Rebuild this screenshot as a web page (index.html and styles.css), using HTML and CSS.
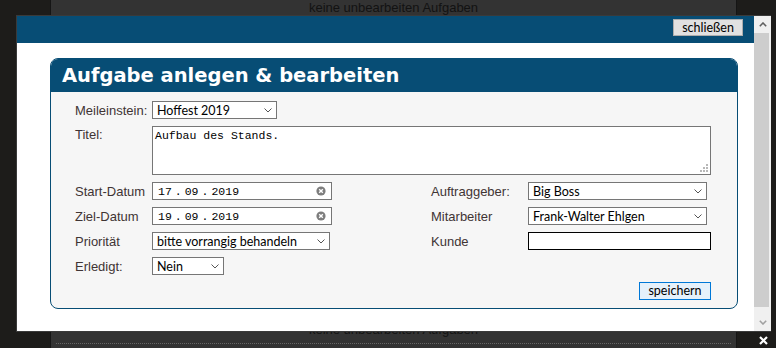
FILE: index.html
```html
<!DOCTYPE html>
<html lang="de">

<head>
    <meta charset="UTF-8">
    <meta name="viewport" content="width=device-width, initial-scale=1.0">
    <title>Aufgaben</title>
    <link rel="stylesheet" href="styles.css">
</head>

<body>
    <!-- Seite im Hintergrund -->
    <div class="page">
        <div class="task-row">keine unbearbeiten Aufgaben</div>
        <div class="task-row task-row-last">keine unbearbeiten Aufgaben</div>
    </div>

    <!-- Dialog -->
    <div class="modal">
        <div class="modal-content">
            <div class="modal-bar">
                <button class="btn btn-close" type="button">schließen</button>
            </div>

            <form class="panel">
                <h1 class="panel-title">Aufgabe anlegen &amp; bearbeiten</h1>
                <div class="panel-body">
                    <div class="field-row">
                        <label class="label">Meileinstein:</label>
                        <span class="select select-milestone">
                            <select><option>Hoffest 2019</option></select>
                            <svg class="chevron" width="8" height="5" viewBox="0 0 8 5"><polyline points="0.5,0.5 4,4 7.5,0.5" fill="none" stroke="#555" stroke-width="1"/></svg>
                        </span>
                    </div>

                    <div class="field-row field-row-top">
                        <label class="label label-top">Titel:</label>
                        <span class="textarea-wrap">
                            <textarea class="textarea">Aufbau des Stands.</textarea>
                            <svg class="grip" width="8" height="8" viewBox="0 0 8 8">
                                <rect x="6" y="0" width="2" height="2"/>
                                <rect x="3" y="3" width="2" height="2"/>
                                <rect x="6" y="3" width="2" height="2"/>
                                <rect x="0" y="6" width="2" height="2"/>
                                <rect x="3" y="6" width="2" height="2"/>
                                <rect x="6" y="6" width="2" height="2"/>
                            </svg>
                        </span>
                    </div>

                    <div class="field-grid">
                        <label class="label">Start-Datum</label>
                        <div class="date-input">
                            <span>17</span><span class="sep">.</span><span>09</span><span class="sep">.</span><span>2019</span>
                            <svg class="clear" width="10" height="10" viewBox="0 0 10 10"><circle cx="5" cy="5" r="4.6" fill="#7d7d7d"/><path d="M3.2 3.2 L6.8 6.8 M6.8 3.2 L3.2 6.8" stroke="#fff" stroke-width="1.4"/></svg>
                        </div>
                        <label class="label">Auftraggeber:</label>
                        <span class="select select-wide">
                            <select><option>Big Boss</option></select>
                            <svg class="chevron" width="8" height="5" viewBox="0 0 8 5"><polyline points="0.5,0.5 4,4 7.5,0.5" fill="none" stroke="#555" stroke-width="1"/></svg>
                        </span>

                        <label class="label">Ziel-Datum</label>
                        <div class="date-input">
                            <span>19</span><span class="sep">.</span><span>09</span><span class="sep">.</span><span>2019</span>
                            <svg class="clear" width="10" height="10" viewBox="0 0 10 10"><circle cx="5" cy="5" r="4.6" fill="#7d7d7d"/><path d="M3.2 3.2 L6.8 6.8 M6.8 3.2 L3.2 6.8" stroke="#fff" stroke-width="1.4"/></svg>
                        </div>
                        <label class="label">Mitarbeiter</label>
                        <span class="select select-wide">
                            <select><option>Frank-Walter Ehlgen</option></select>
                            <svg class="chevron" width="8" height="5" viewBox="0 0 8 5"><polyline points="0.5,0.5 4,4 7.5,0.5" fill="none" stroke="#555" stroke-width="1"/></svg>
                        </span>

                        <label class="label">Priorität</label>
                        <span class="select select-priority">
                            <select><option>bitte vorrangig behandeln</option></select>
                            <svg class="chevron" width="8" height="5" viewBox="0 0 8 5"><polyline points="0.5,0.5 4,4 7.5,0.5" fill="none" stroke="#555" stroke-width="1"/></svg>
                        </span>
                        <label class="label">Kunde</label>
                        <input class="text-input" type="text">

                        <label class="label">Erledigt:</label>
                        <span class="select select-done">
                            <select><option>Nein</option></select>
                            <svg class="chevron" width="8" height="5" viewBox="0 0 8 5"><polyline points="0.5,0.5 4,4 7.5,0.5" fill="none" stroke="#555" stroke-width="1"/></svg>
                        </span>
                    </div>

                    <div class="panel-footer">
                        <button class="btn btn-save" type="button">speichern</button>
                    </div>
                </div>
            </form>
        </div>

        <!-- Scrollbar im Windows-Stil -->
        <div class="scrollbar">
            <div class="sb-arrow">
                <svg width="8" height="5" viewBox="0 0 8 5"><polyline points="0.8,4.2 4,1 7.2,4.2" fill="none" stroke="#606060" stroke-width="1.6"/></svg>
            </div>
            <div class="sb-track"><div class="sb-thumb"></div></div>
            <div class="sb-arrow">
                <svg width="8" height="5" viewBox="0 0 8 5"><polyline points="0.8,0.8 4,4 7.2,0.8" fill="none" stroke="#a0a0a0" stroke-width="1.6"/></svg>
            </div>
        </div>
    </div>

    <svg class="overlay-close" width="9" height="9" viewBox="0 0 9 9"><path d="M1 1 L8 8 M8 1 L1 8" stroke="#fff" stroke-width="2.2"/></svg>
</body>

</html>
```

FILE: styles.css
```css
/* Farben */
:root {
    --blau: #074d75;
    --hintergrund: #1d1c1a;
    --seite: #333333;
    --panel: #f6f6f6;
    --label: #3f3434;
    --rahmen: #767676;
}

body {
    margin: 0;
    height: 348px;
    overflow: hidden;
    position: relative;
    background-color: var(--hintergrund);
    font-family: "Liberation Sans", Arial, sans-serif;
}

/* --- Seite im Hintergrund --- */
.page {
    margin-left: 50px;
    width: 685px;
    height: 348px;
    background-color: var(--seite);
    border-left: 1px solid #151515;
    border-right: 1px solid #151515;
    display: flex;
    flex-direction: column;
}

.task-row {
    margin: 0 5px;
    padding: 0 0 6px;
    line-height: 15px;
    font-size: 13px;
    text-align: center;
    color: #121212;
    border-bottom: 1px dotted #666;
}

.task-row-last {
    margin-top: auto;
    margin-bottom: 4px;
}

/* --- Dialog --- */
.modal {
    position: absolute;
    left: 17px;
    top: 16px;
    width: 753px;
    height: 315px;
    background-color: #fff;
    display: flex;
    box-shadow: 0 0 0 1px #3a3a3a;
}

.modal-content {
    flex: 1;
}

.modal-bar {
    height: 27px;
    box-sizing: border-box;
    background-color: var(--blau);
    display: flex;
    justify-content: flex-end;
    align-items: flex-start;
    padding: 3px 11px 0 0;
}

.btn {
    font-family: Lato, "Liberation Sans", sans-serif;
    font-size: 12.5px;
    color: #000;
    height: 17px;
    line-height: 14px;
    padding: 0;
    border-radius: 0;
}

.btn-close {
    width: 70px;
    background-color: #e1e1e1;
    border: 1px solid #adadad;
}

.btn-save {
    width: 72px;
    height: 18px;
    background-color: #e5f1fb;
    border: 1px solid #0078d7;
}

.panel {
    margin: 15px 16px 0 33px;
    border: 1px solid var(--blau);
    border-radius: 8px;
    background-color: var(--panel);
    overflow: hidden;
}

.panel-title {
    margin: 0;
    height: 33px;
    line-height: 33px;
    padding-left: 11px;
    background-color: var(--blau);
    color: #fff;
    font-family: "DejaVu Sans", Verdana, sans-serif;
    font-size: 19.5px;
    font-weight: bold;
}

.panel-body {
    padding: 9px 26px 8px 24px;
}

.label {
    font-size: 13px;
    color: var(--label);
}

.field-row {
    display: flex;
    align-items: center;
    height: 18px;
}

.field-row .label {
    width: 77px;
    flex: none;
}

.field-row-top {
    height: auto;
    align-items: flex-start;
    margin-top: 7px;
}

.label-top {
    padding-top: 1px;
}

/* Auswahlfelder */
.select {
    position: relative;
    display: inline-block;
    height: 18px;
}

.select select {
    appearance: none;
    -webkit-appearance: none;
    display: block;
    width: 100%;
    height: 18px;
    margin: 0;
    padding: 0 0 0 4px;
    border: 1px solid var(--rahmen);
    border-radius: 0;
    background-color: #fff;
    color: #000;
    font-family: Lato, "Liberation Sans", sans-serif;
    font-size: 12.5px;
    outline: none;
}

.select .chevron {
    position: absolute;
    right: 5px;
    top: 7px;
    pointer-events: none;
}

.select-milestone { width: 125px; }
.select-priority { width: 178px; }
.select-done { width: 72px; }
.select-wide { width: 179px; }

/* Titel */
.textarea-wrap {
    position: relative;
    display: block;
    flex: 1;
}

.textarea {
    display: block;
    width: 100%;
    height: 49px;
    box-sizing: border-box;
    margin: 0;
    padding: 2px 2px;
    border: 1px solid var(--rahmen);
    border-radius: 0;
    resize: none;
    font-family: "Liberation Mono", "Courier New", monospace;
    font-size: 11.5px;
    line-height: 14px;
    color: #000;
    background-color: #fff;
}

.grip {
    position: absolute;
    right: 3px;
    bottom: 3px;
    fill: #b8b8b8;
}

/* Raster für Datum / Personen */
.field-grid {
    display: grid;
    grid-template-columns: 77px 279px 97px auto;
    grid-auto-rows: 18px;
    row-gap: 7px;
    align-items: center;
    justify-items: start;
    margin-top: 7px;
}

.date-input {
    width: 180px;
    height: 18px;
    box-sizing: border-box;
    border: 1px solid var(--rahmen);
    background-color: #fff;
    display: flex;
    align-items: center;
    padding: 0 5px 0 5px;
    font-family: "Liberation Mono", "Courier New", monospace;
    font-size: 11.5px;
    color: #000;
}

.date-input .sep {
    margin: 0 3px;
}

.date-input .clear {
    margin-left: auto;
}

.text-input {
    width: 183px;
    height: 18px;
    box-sizing: border-box;
    margin: 0;
    padding: 0;
    border: 1px solid #000;
    border-radius: 0;
    background-color: #fff;
}

.panel-footer {
    display: flex;
    justify-content: flex-end;
    margin-top: 7px;
}

/* Scrollbar */
.scrollbar {
    width: 17px;
    flex: none;
    background-color: #f0f0f0;
    display: flex;
    flex-direction: column;
}

.sb-arrow {
    height: 17px;
    display: flex;
    align-items: center;
    justify-content: center;
}

.sb-track {
    flex: 1;
    padding: 0 2px 7px 0;
}

.sb-thumb {
    height: 100%;
    background-color: #cdcdcd;
}

.overlay-close {
    position: absolute;
    left: 759px;
    top: 336px;
}
```
